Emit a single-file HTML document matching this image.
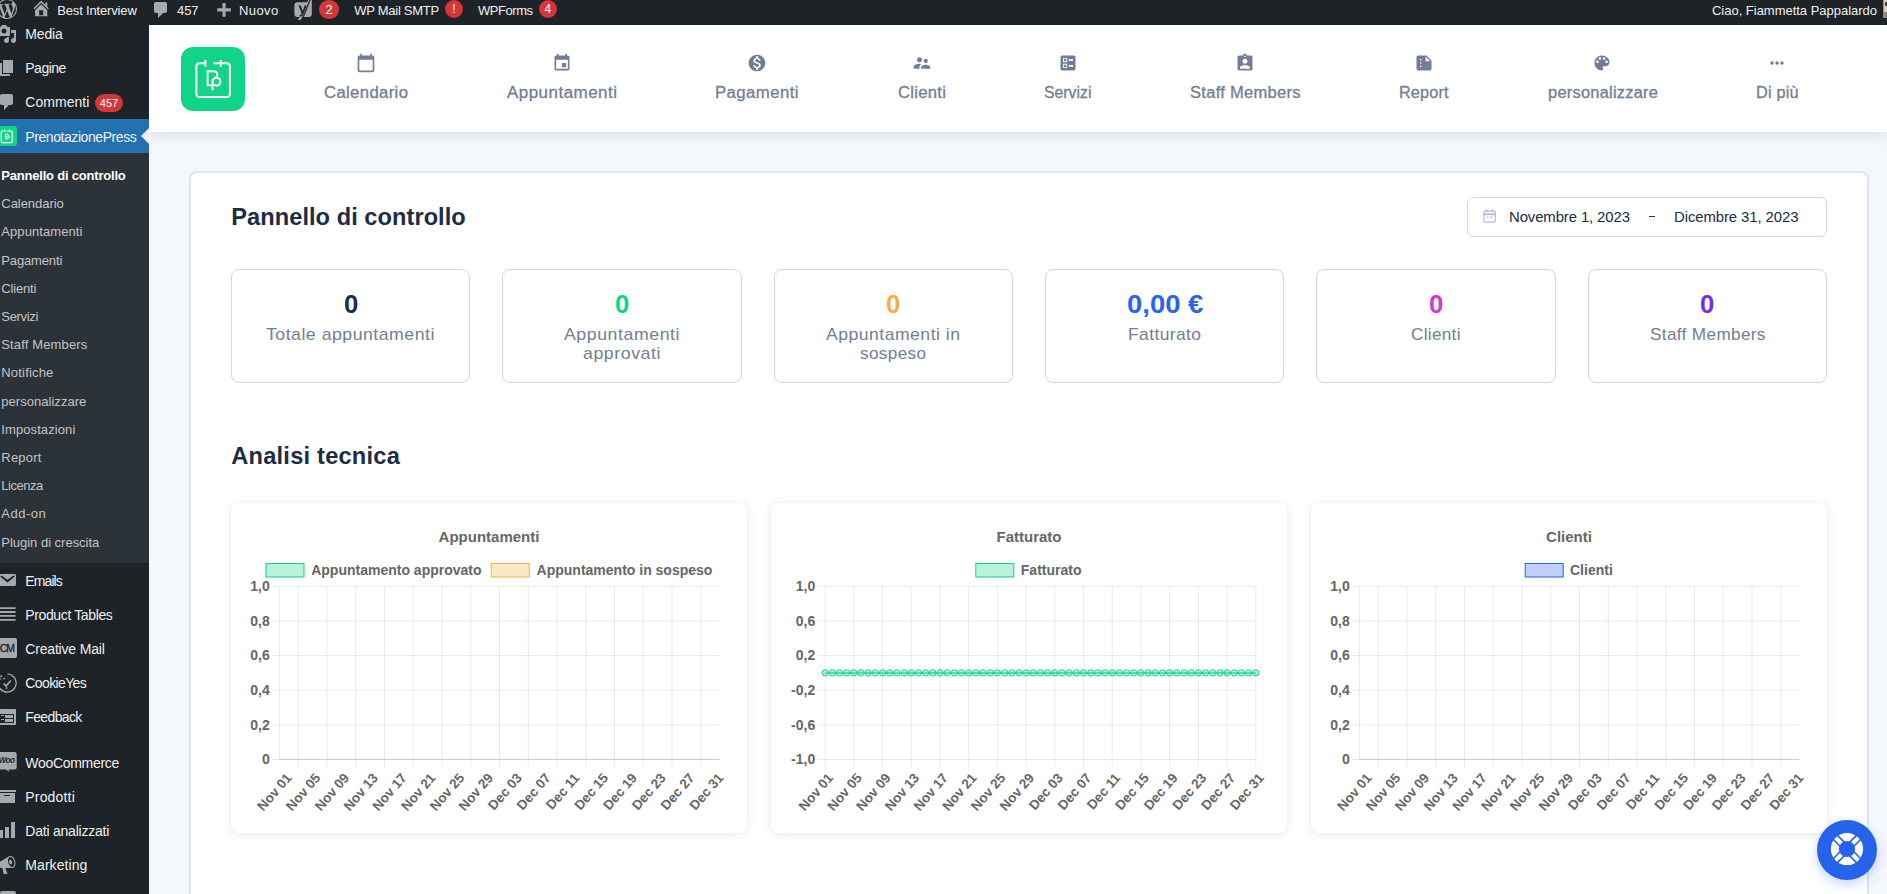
<!DOCTYPE html><html><head><meta charset="utf-8"><title>Pannello di controllo</title><style>
*{box-sizing:border-box;margin:0;padding:0}
html,body{width:1887px;height:894px;overflow:hidden;background:#f4f7fb;font-family:"Liberation Sans",sans-serif;}
.abs{position:absolute}
.t{position:absolute;white-space:nowrap;line-height:1}
#adminbar{position:absolute;left:0;top:0;width:1887px;height:25px;background:#1d2327}
#sidebar{position:absolute;left:0;top:25px;width:149px;height:869px;background:#1d2327}
#submenu{position:absolute;left:0;top:153px;width:149px;height:410px;background:#2c3338}
#current{position:absolute;left:0;top:119px;width:149px;height:34px;background:#2271b1}
#topnav{position:absolute;left:149px;top:25px;width:1738px;height:107px;background:#fff;box-shadow:0 3px 11px rgba(110,125,165,0.19)}
#card{position:absolute;left:189px;top:171px;width:1680px;height:760px;background:#fff;border:2px solid #dce3f5;border-radius:8px}
.stat{position:absolute;top:269px;height:114px;width:239.33px;border:1px solid #cfd6e5;border-radius:8px;background:#fff}
.chart{position:absolute;top:503px;width:516px;height:330px;background:#fff;border-radius:8px;box-shadow:0 1px 9px rgba(60,70,100,0.14)}
.badge{position:absolute;background:#d63638;color:#fff;border-radius:9px;text-align:center;font-size:11px;line-height:18px;height:18px}
svg{position:absolute;overflow:visible}
svg text{font-family:"Liberation Sans",sans-serif}
</style></head><body>
<div id="card"></div>
<div id="topnav"></div>
<div id="sidebar"></div><div id="submenu"></div><div id="current"></div>
<div id="adminbar"></div>
<svg style="left:-3.50px;top:-1.30px" width="20" height="20" viewBox="0 0 20 20" ><path fill="#a7aaad" d="M20 10c0-5.51-4.49-10-10-10C4.48 0 0 4.49 0 10c0 5.52 4.48 10 10 10 5.51 0 10-4.48 10-10zM7.78 15.37L4.37 6.22c.55-.02 1.17-.08 1.17-.08.5-.06.44-1.13-.06-1.11 0 0-1.45.11-2.37.11-.18 0-.37 0-.58-.01C4.12 2.69 6.87 1.11 10 1.11c2.33 0 4.45.87 6.05 2.34-.68-.11-1.65.39-1.65 1.58 0 .74.45 1.36.9 2.1.35.61.55 1.36.55 2.46 0 1.49-1.4 5-1.4 5l-3.03-8.37c.54-.02.82-.17.82-.17.5-.05.44-1.25-.06-1.22 0 0-1.44.12-2.38.12-.87 0-2.33-.12-2.33-.12-.5-.03-.56 1.2-.06 1.22l.92.08 1.26 3.41zM17.41 10c.24-.64.74-1.87.43-4.25.7 1.29 1.05 2.71 1.05 4.25 0 3.29-1.73 6.24-4.4 7.78.97-2.59 1.94-5.2 2.92-7.78zM6.1 18.09C3.12 16.65 1.11 13.53 1.11 10c0-1.3.23-2.48.72-3.59C3.25 10.3 4.67 14.2 6.1 18.09zm4.03-6.63l2.58 6.98c-.86.29-1.76.45-2.71.45-.79 0-1.57-.11-2.29-.33.81-2.38 1.62-4.74 2.42-7.1z"/></svg>
<svg style="left:30.80px;top:-1.70px" width="20.4" height="20.4" viewBox="0 0 20 20" ><path fill="#a7aaad" d="M16 8.5l1.53 1.53-1.06 1.06L10 4.62l-6.47 6.47-1.06-1.06L10 2.5l4 4v-2h2v4zm-6-2.46l6 5.99V18H4v-5.97zM12 17v-5H8v5h4z"/></svg>
<div class="t" style="left:57.30px;top:4.00px;font-size:13.00px;letter-spacing:-0.165px;color:#f0f0f1;">Best Interview</div>
<svg style="left:150.80px;top:0.30px" width="20" height="20" viewBox="0 0 20 20" ><path fill="#a7aaad" d="M5 2h9c1.1 0 2 .9 2 2v7c0 1.1-.9 2-2 2h-2l-5 5v-5H5c-1.1 0-2-.9-2-2V4c0-1.1.9-2 2-2z"/></svg>
<div class="t" style="left:177.00px;top:4.00px;font-size:13.00px;letter-spacing:-0.095px;color:#f0f0f1;">457</div>
<svg style="left:212.70px;top:1.40px" width="21" height="21" viewBox="0 0 20 20" ><path fill="#a7aaad" d="M17 7v3h-5v5H9v-5H4V7h5V2h3v5h5z"/></svg>
<div class="t" style="left:239.00px;top:4.00px;font-size:13.00px;letter-spacing:0.405px;color:#f0f0f1;">Nuovo</div>
<svg style="left:293px;top:-1px" width="21" height="21" viewBox="0 0 21 21"><path fill="#a7aaad" d="M4.2 3.2h9.6l2.6-3.2h2.4v15.2c0 1.6-1.2 2.8-2.8 2.8H9.6l-2.2 3H4.6l2.3-3H4.2C2.6 18 1.4 16.8 1.4 15.2V6c0-1.6 1.2-2.8 2.8-2.8z"/><path fill="#1d2327" d="M16.6 0.4h1.3L9.9 20.6H8.6z"/><path fill="#1d2327" d="M5.6 6.4h2.1l2 5.6 2-5.6h2l-3.4 8.9c-.6 1.6-1.5 2.3-3 2.3h-.7v-1.7h.6c.7 0 1.1-.3 1.4-1l.1-.4z"/></svg>
<div class="abs" style="left:319.20px;top:-0.50px;width:19.6px;height:19.6px;border-radius:50%;background:#d63638"></div>
<div class="t" style="left:325.38px;top:2.98px;font-size:13.00px;color:#fff;">2</div>
<div class="t" style="left:354.20px;top:4.00px;font-size:13.00px;letter-spacing:-0.262px;color:#f0f0f1;">WP Mail SMTP</div>
<div class="abs" style="left:445.00px;top:0.30px;width:18px;height:18px;border-radius:50%;background:#d63638"></div>
<div class="t" style="left:452.33px;top:3.46px;font-size:12.00px;color:#fff;">!</div>
<div class="t" style="left:478.00px;top:4.00px;font-size:13.00px;letter-spacing:-0.462px;color:#f0f0f1;">WPForms</div>
<div class="abs" style="left:538.80px;top:0.30px;width:18px;height:18px;border-radius:50%;background:#d63638"></div>
<div class="t" style="left:544.46px;top:3.46px;font-size:12.00px;color:#fff;">4</div>
<div class="t" style="left:1712.00px;top:4.00px;font-size:13.00px;letter-spacing:-0.019px;color:#f0f0f1;">Ciao, Fiammetta Pappalardo</div>
<div class="abs" style="left:1883px;top:-1px;width:6px;height:19px;background:#d9d0c2;border:1px solid #8c8f94"></div>
<div class="abs" style="left:1885px;top:2px;width:2px;height:4px;background:#3b322c;border-radius:1px 0 0 1px"></div>
<div class="abs" style="left:1884px;top:12px;width:3px;height:5px;background:#8d8781"></div>
<svg style="left:-3.00px;top:24.00px" width="20" height="20" viewBox="0 0 20 20" ><path fill="#a7aaad" d="M13 11V4c0-.55-.45-1-1-1h-1.67L9 1H5L3.67 3H2c-.55 0-1 .45-1 1v7c0 .55.45 1 1 1h10c.55 0 1-.45 1-1zM7 4.5c1.38 0 2.5 1.12 2.5 2.5S8.38 9.5 7 9.5 4.5 8.38 4.5 7 5.62 4.5 7 4.5zM14 6h5v10.5c0 1.38-1.12 2.5-2.5 2.5S14 17.88 14 16.5s1.12-2.5 2.5-2.5c.17 0 .34.02.5.05V9h-3V6zm-4 8.05V13h2v3.5c0 1.38-1.12 2.5-2.5 2.5S7 17.88 7 16.5 8.12 14 9.5 14c.17 0 .34.02.5.05z"/></svg>
<div class="t" style="left:25.30px;top:27.15px;font-size:14.00px;letter-spacing:-0.158px;color:#f0f0f1;">Media</div>
<svg style="left:-3.00px;top:58.00px" width="20" height="20" viewBox="0 0 20 20" ><path fill="#a7aaad" d="M6 15V2h10v13H6zm-1 1h8v2H3V5h2v11z"/></svg>
<div class="t" style="left:25.30px;top:61.15px;font-size:14.00px;letter-spacing:-0.519px;color:#f0f0f1;">Pagine</div>
<svg style="left:-3.00px;top:92.00px" width="20" height="20" viewBox="0 0 20 20" ><path fill="#a7aaad" d="M5 2h9c1.1 0 2 .9 2 2v7c0 1.1-.9 2-2 2h-2l-5 5v-5H5c-1.1 0-2-.9-2-2V4c0-1.1.9-2 2-2z"/></svg>
<div class="t" style="left:25.30px;top:95.15px;font-size:14.00px;letter-spacing:0.029px;color:#f0f0f1;">Commenti</div>
<div class="badge" style="left:94.8px;top:94px;width:28.4px">457</div>
<div class="abs" style="left:0;top:126px;width:17px;height:20px;background:#12d488;border-radius:0 3px 3px 0"></div>
<svg style="left:-3px;top:126px" width="20" height="20" viewBox="0 0 20 20"><rect x="4.2" y="5" width="11" height="11.6" rx="1.3" fill="none" stroke="#fff" stroke-width="1.1"/><path d="M8 3.6v2.4M12.6 3.6v2.4" stroke="#fff" stroke-width="1.1"/><path d="M8.2 5h2" stroke="#12d488" stroke-width="1.4"/><path d="M8.4 8.2h1.9c1.6 0 1.6 2.2 0 2.4M8.4 8.2v4.3h1.4M9.8 14v-3a1.3 1.3 0 1 1 1.3 1.3" fill="none" stroke="#fff" stroke-width="0.9"/></svg>
<div class="t" style="left:25.30px;top:129.95px;font-size:14.00px;letter-spacing:-0.425px;color:#f0f0f1;">PrenotazionePress</div>
<div class="abs" style="left:141px;top:128px;width:0;height:0;border:8px solid transparent;border-right-color:#f0f0f1;border-left-width:0"></div>
<div class="t" style="left:1.30px;top:169.00px;font-size:13.00px;letter-spacing:-0.203px;color:#fff;font-weight:bold;">Pannello di controllo</div>
<div class="t" style="left:1.30px;top:197.20px;font-size:13.00px;letter-spacing:-0.042px;color:#c3c4c7;">Calendario</div>
<div class="t" style="left:1.30px;top:225.40px;font-size:13.00px;letter-spacing:0.071px;color:#c3c4c7;">Appuntamenti</div>
<div class="t" style="left:1.30px;top:253.60px;font-size:13.00px;letter-spacing:-0.144px;color:#c3c4c7;">Pagamenti</div>
<div class="t" style="left:1.30px;top:281.80px;font-size:13.00px;letter-spacing:-0.188px;color:#c3c4c7;">Clienti</div>
<div class="t" style="left:1.30px;top:310.00px;font-size:13.00px;letter-spacing:-0.335px;color:#c3c4c7;">Servizi</div>
<div class="t" style="left:1.30px;top:338.20px;font-size:13.00px;letter-spacing:0.142px;color:#c3c4c7;">Staff Members</div>
<div class="t" style="left:1.30px;top:366.40px;font-size:13.00px;letter-spacing:0.178px;color:#c3c4c7;">Notifiche</div>
<div class="t" style="left:1.30px;top:394.60px;font-size:13.00px;letter-spacing:0.035px;color:#c3c4c7;">personalizzare</div>
<div class="t" style="left:1.30px;top:422.80px;font-size:13.00px;letter-spacing:0.093px;color:#c3c4c7;">Impostazioni</div>
<div class="t" style="left:1.30px;top:451.00px;font-size:13.00px;letter-spacing:0.196px;color:#c3c4c7;">Report</div>
<div class="t" style="left:1.30px;top:479.20px;font-size:13.00px;letter-spacing:-0.468px;color:#c3c4c7;">Licenza</div>
<div class="t" style="left:1.30px;top:507.40px;font-size:13.00px;letter-spacing:0.516px;color:#c3c4c7;">Add-on</div>
<div class="t" style="left:1.30px;top:535.60px;font-size:13.00px;letter-spacing:-0.016px;color:#c3c4c7;">Plugin di crescita</div>
<svg style="left:-3.00px;top:569.90px" width="20" height="20" viewBox="0 0 20 20" ><path fill="#a7aaad" d="M3.87 4h13.25C18.37 4 19 4.59 19 5.79v8.42c0 1.19-.63 1.79-1.88 1.79H3.87c-1.25 0-1.88-.6-1.88-1.79V5.79c0-1.2.63-1.79 1.88-1.79zm6.62 8.6l6.74-5.53c.24-.2.43-.66.13-1.07-.29-.41-.82-.42-1.17-.17l-5.7 3.86L4.8 5.83c-.35-.25-.88-.24-1.17.17-.3.41-.11.87.13 1.07z"/></svg>
<div class="t" style="left:25.30px;top:574.15px;font-size:14.00px;letter-spacing:-0.902px;color:#f0f0f1;">Emails</div>
<svg style="left:-3px;top:604.2px" width="20" height="20" viewBox="0 0 20 20"><path d="M2 4.1h16.6M2 8h16.6M2 11.9h16.6M2 15.8h16.6" stroke="#a7aaad" stroke-width="1.8"/></svg>
<div class="t" style="left:25.30px;top:608.15px;font-size:14.00px;letter-spacing:-0.374px;color:#f0f0f1;">Product Tables</div>
<div class="abs" style="left:-2px;top:638.2px;width:19px;height:19.6px;background:#a7aaad;border-radius:2px"></div>
<div class="t" style="left:-0.30px;top:643.50px;font-size:10.40px;letter-spacing:-0.874px;color:#1d2327;-webkit-text-stroke:0.3px #1d2327;">CM</div>
<div class="t" style="left:25.30px;top:642.15px;font-size:14.00px;letter-spacing:-0.183px;color:#f0f0f1;">Creative Mail</div>
<svg style="left:-3px;top:673px" width="20" height="20" viewBox="0 0 20 20"><path d="M10.4 0.9a9.1 9.1 0 1 1-9.2 7.3" fill="none" stroke="#a7aaad" stroke-width="1.3"/><path d="M6.6 10.4l2.5 2.6 4.8-5.6" fill="none" stroke="#a7aaad" stroke-width="1.6"/><circle cx="4.2" cy="3.2" r="1" fill="#a7aaad"/><circle cx="7" cy="5.6" r="0.9" fill="#a7aaad"/><circle cx="3.4" cy="6" r="0.7" fill="#a7aaad"/><circle cx="9.6" cy="15" r="0.9" fill="#a7aaad"/></svg>
<div class="t" style="left:25.30px;top:676.15px;font-size:14.00px;letter-spacing:-0.615px;color:#f0f0f1;">CookieYes</div>
<svg style="left:-3.00px;top:707.00px" width="20" height="20" viewBox="0 0 20 20" ><path fill="#a7aaad" d="M2 2h16c.55 0 1 .45 1 1v14c0 .55-.45 1-1 1H2c-.55 0-1-.45-1-1V3c0-.55.45-1 1-1zm15 14V7H3v9h14zM4 8v1h3V8H4zm4 0v3h8V8H8zm-4 4v1h3v-1H4zm4 0v3h8v-3H8z"/></svg>
<div class="t" style="left:25.30px;top:710.15px;font-size:14.00px;letter-spacing:-0.641px;color:#f0f0f1;">Feedback</div>
<svg style="left:-3px;top:751px" width="20" height="22" viewBox="0 0 20 22"><path fill="#a7aaad" d="M1.5 1.1h16.3c1 0 1.900.8 1.900 1.900v13.500c0 1-.8 1.900-1.900 1.900h-6.200l.9 2.600-3.600-2.600H1.500c-1 0-1.900-.8-1.900-1.900V3c0-1 .8-1.900 1.900-1.900z"/></svg>
<div class="t" style="left:-1.60px;top:757.36px;font-size:8.20px;letter-spacing:-0.555px;color:#1d2327;font-weight:bold;font-style:italic;">Woo</div>
<div class="t" style="left:25.30px;top:756.15px;font-size:14.00px;letter-spacing:-0.299px;color:#f0f0f1;">WooCommerce</div>
<svg style="left:-3.00px;top:786.20px" width="20" height="20" viewBox="0 0 20 20" ><path fill="#a7aaad" d="M19 4v2H1V4h18zM2 7h16v10H2V7zm11 3V9H7v1h6z"/></svg>
<div class="t" style="left:25.30px;top:790.15px;font-size:14.00px;letter-spacing:0.179px;color:#f0f0f1;">Prodotti</div>
<svg style="left:-3.00px;top:820.20px" width="20" height="20" viewBox="0 0 20 20" ><path fill="#a7aaad" d="M18 18V2h-4v16h4zm-6 0V7H8v11h4zm-6 0v-8H2v8h4z"/></svg>
<div class="t" style="left:25.30px;top:824.15px;font-size:14.00px;letter-spacing:-0.225px;color:#f0f0f1;">Dati analizzati</div>
<svg style="left:-3.00px;top:854.50px" width="20" height="20" viewBox="0 0 20 20" ><path fill="#a7aaad" d="M18.15 5.94c.46 1.62.38 3.22-.02 4.48-.42 1.28-1.26 2.18-2.3 2.48-.16.06-.26.06-.4.06-.06.02-.12.02-.18.02-.06.02-.14.02-.22.02h-6.8l2.22 5.5c.02.14-.06.26-.14.34-.08.1-.24.16-.34.16H6.95c-.1 0-.26-.06-.34-.16-.08-.08-.16-.2-.14-.34l-1-5.5H4.25l-.02-.02c-.5.06-1.08-.18-1.54-.62s-.88-1.08-1.06-1.88c-.24-.8-.2-1.56-.02-2.2.18-.62.58-1.08 1.06-1.3l.02-.02 9-5.4c.1-.06.18-.1.24-.16.06-.04.14-.08.24-.12.16-.08.28-.12.5-.18 1.04-.3 2.24.1 3.22.98s1.84 2.24 2.26 3.86zm-2.58 5.98h-.02c.4-.1.74-.34 1.04-.7.58-.7.86-1.76.86-3.04 0-.64-.1-1.3-.28-1.98-.34-1.36-1.02-2.5-1.78-3.24s-1.68-1.1-2.46-.88c-.82.22-1.4.96-1.7 2-.32 1.04-.28 2.36.06 3.72.38 1.36 1 2.5 1.8 3.24.78.74 1.62 1.1 2.48.88zm-2.54-7.08c.22-.04.42-.02.62.04.38.16.76.48 1.02 1s.42 1.2.42 1.78c0 .3-.04.56-.12.8-.18.48-.44.84-.86.94-.34.1-.8-.06-1.14-.4s-.64-.86-.78-1.5c-.18-.62-.12-1.24.02-1.72s.48-.84.82-.94z"/></svg>
<div class="t" style="left:25.30px;top:858.15px;font-size:14.00px;letter-spacing:0.066px;color:#f0f0f1;">Marketing</div>
<div class="abs" style="left:0;top:890.5px;width:16px;height:4px;background:#a7aaad;border-radius:2px 2px 0 0"></div>
<div class="abs" style="left:181px;top:47px;width:64px;height:64px;border-radius:12px;background:#12d488"></div>
<svg style="left:181px;top:47px" width="64" height="64" viewBox="0 0 64 64" fill="none" stroke="#fff" stroke-width="2" stroke-linecap="butt">
<path d="M24.4 16.3H18.4a3 3 0 0 0-3 3V47a3 3 0 0 0 3 3H45.9a3 3 0 0 0 3-3V19.3a3 3 0 0 0-3-3H32.3"/>
<path d="M24.4 12.9v6.8M39.8 12.9v6.8" stroke-width="2.1"/>
<path d="M26.6 24.3h6c2.5 0 3.7 1.5 3.7 3.3 0 1.5-.9 2.8-2.4 3.2" stroke-width="1.9"/>
<path d="M26.6 23.35v15h4.9" stroke-width="1.9"/>
<circle cx="35.5" cy="34.7" r="3.9" stroke-width="1.9"/>
<path d="M31.55 32.4v10.9" stroke-width="1.9"/>
</svg>
<svg style="left:355.70px;top:53.00px" width="20" height="20" viewBox="0 0 24 24" ><path fill="#727e95" d="M20 3h-1V1h-2v2H7V1H5v2H4c-1.1 0-2 .9-2 2v16c0 1.1.9 2 2 2h16c1.1 0 2-.9 2-2V5c0-1.1-.9-2-2-2zm0 18H4V8h16v13z"/></svg>
<div class="t" style="left:323.70px;top:85.39px;font-size:15.60px;letter-spacing:0.332px;color:#727e95;transform:scaleX(1.0708);transform-origin:0 0;-webkit-text-stroke:0.3px #727e95;">Calendario</div>
<svg style="left:551.50px;top:53.00px" width="20" height="20" viewBox="0 0 24 24" ><path fill="#727e95" d="M17 12h-5v5h5v-5zM16 1v2H8V1H6v2H5c-1.11 0-1.99.9-1.99 2L3 19c0 1.1.89 2 2 2h14c1.1 0 2-.9 2-2V5c0-1.1-.9-2-2-2h-1V1h-2zm3 18H5V8h14v11z"/></svg>
<div class="t" style="left:506.50px;top:85.39px;font-size:15.60px;letter-spacing:0.437px;color:#727e95;transform:scaleX(1.0883);transform-origin:0 0;-webkit-text-stroke:0.3px #727e95;">Appuntamenti</div>
<svg style="left:747.00px;top:53.00px" width="20" height="20" viewBox="0 0 24 24" ><path fill="#727e95" d="M12 2C6.48 2 2 6.48 2 12s4.48 10 10 10 10-4.48 10-10S17.52 2 12 2zm1.41 16.09V20h-2.67v-1.93c-1.71-.36-3.16-1.46-3.27-3.4h1.96c.1 1.05.82 1.87 2.65 1.87 1.96 0 2.4-.98 2.4-1.59 0-.83-.44-1.61-2.67-2.14-2.48-.6-4.18-1.62-4.18-3.67 0-1.72 1.39-2.84 3.11-3.21V4h2.67v1.95c1.86.45 2.79 1.86 2.85 3.39H14.3c-.05-1.11-.64-1.87-2.22-1.87-1.5 0-2.4.68-2.4 1.64 0 .84.65 1.39 2.67 1.91s4.18 1.39 4.18 3.91c-.01 1.83-1.38 2.83-3.12 3.16z"/></svg>
<div class="t" style="left:715.25px;top:85.39px;font-size:15.60px;letter-spacing:0.390px;color:#727e95;transform:scaleX(1.0746);transform-origin:0 0;-webkit-text-stroke:0.3px #727e95;">Pagamenti</div>
<svg style="left:911.50px;top:53.00px" width="20" height="20" viewBox="0 0 24 24" ><path fill="#727e95" d="M16.5 12c1.38 0 2.49-1.12 2.49-2.5S17.88 7 16.5 7C15.12 7 14 8.12 14 9.5s1.12 2.5 2.5 2.5zM9 11c1.66 0 2.99-1.34 2.99-3S10.66 5 9 5C7.34 5 6 6.34 6 8s1.34 3 3 3zm7.5 3c-1.83 0-5.5.92-5.5 2.75V19h11v-2.25c0-1.83-3.67-2.75-5.5-2.75zM9 13c-2.33 0-7 1.17-7 3.5V19h7v-2.25c0-.85.33-2.34 2.37-3.47C10.5 13.1 9.66 13 9 13z"/></svg>
<div class="t" style="left:897.50px;top:85.39px;font-size:15.60px;letter-spacing:0.271px;color:#727e95;transform:scaleX(1.0672);transform-origin:0 0;-webkit-text-stroke:0.3px #727e95;">Clienti</div>
<svg style="left:1058.00px;top:53.00px" width="20" height="20" viewBox="0 0 24 24" ><path fill="#727e95" d="M13 9.5h5v-2h-5v2zm0 7h5v-2h-5v2zm6 4.500H5c-1.1 0-2-.9-2-2V5c0-1.1.9-2 2-2h14c1.100 0 2 .9 2 2v14c0 1.1-.9 2-2 2zM6 11h5V6H6v5zm1-4h3v3H7V7zM6 18h5v-5H6v5zm1-4h3v3H7v-3z"/></svg>
<div class="t" style="left:1044.25px;top:85.39px;font-size:15.60px;letter-spacing:0.040px;color:#727e95;transform:scaleX(1.0095);transform-origin:0 0;-webkit-text-stroke:0.3px #727e95;">Servizi</div>
<svg style="left:1235.30px;top:53.00px" width="20" height="20" viewBox="0 0 24 24" ><path fill="#727e95" d="M19 3h-4.180C14.400 1.840 13.300 1 12 1c-1.300 0-2.400.840-2.820 2H5c-1.100 0-2 .9-2 2v14c0 1.100.9 2 2 2h14c1.100 0 2-.9 2-2V5c0-1.100-.9-2-2-2zm-7 0c.550 0 1 .450 1 1s-.450 1-1 1-1-.450-1-1 .450-1 1-1zm0 4c1.660 0 3 1.340 3 3s-1.340 3-3 3-3-1.340-3-3 1.340-3 3-3zm6 12H6v-1.400c0-2 4-3.100 6-3.100s6 1.100 6 3.100V19z"/></svg>
<div class="t" style="left:1190.05px;top:85.39px;font-size:15.60px;letter-spacing:0.273px;color:#727e95;transform:scaleX(1.0582);transform-origin:0 0;-webkit-text-stroke:0.3px #727e95;">Staff Members</div>
<svg style="left:1414.00px;top:53.00px" width="20" height="20" viewBox="0 0 24 24" ><path fill="#727e95" d="M15 3H5c-1.100 0-1.990.9-1.990 2L3 19c0 1.100.890 2 1.990 2H19c1.100 0 2-.9 2-2V9l-6-6zM8 17c-.550 0-1-.450-1-1s.450-1 1-1 1 .450 1 1-.450 1-1 1zm0-4c-.550 0-1-.450-1-1s.450-1 1-1 1 .450 1 1-.450 1-1 1zm0-4c-.550 0-1-.450-1-1s.450-1 1-1 1 .450 1 1-.450 1-1 1zm6 1V4.500l5.500 5.500H14z"/></svg>
<div class="t" style="left:1399.25px;top:85.39px;font-size:15.60px;letter-spacing:0.187px;color:#727e95;transform:scaleX(1.0364);transform-origin:0 0;-webkit-text-stroke:0.3px #727e95;">Report</div>
<svg style="left:1592.00px;top:53.00px" width="20" height="20" viewBox="0 0 24 24" ><path fill="#727e95" d="M12 3c-4.970 0-9 4.030-9 9s4.030 9 9 9c.830 0 1.500-.670 1.500-1.500 0-.390-.150-.740-.390-1.010-.230-.260-.380-.610-.380-.990 0-.830.670-1.500 1.500-1.500H16c2.760 0 5-2.240 5-5 0-4.420-4.030-8-9-8zm-5.500 9c-.830 0-1.500-.670-1.500-1.500S5.670 9 6.500 9 8 9.670 8 10.500 7.330 12 6.500 12zm3-4C8.670 8 8 7.330 8 6.500S8.670 5 9.500 5s1.500.670 1.500 1.500S10.330 8 9.500 8zm5 0c-.830 0-1.500-.670-1.500-1.500S13.670 5 14.500 5s1.500.670 1.500 1.500S15.330 8 14.500 8zm3 4c-.830 0-1.500-.670-1.500-1.500S16.670 9 17.500 9s1.500.670 1.500 1.500-.670 1.500-1.500 1.500z"/></svg>
<div class="t" style="left:1547.50px;top:85.39px;font-size:15.60px;letter-spacing:0.230px;color:#727e95;transform:scaleX(1.0532);transform-origin:0 0;-webkit-text-stroke:0.3px #727e95;">personalizzare</div>
<svg style="left:1767.00px;top:53.00px" width="20" height="20" viewBox="0 0 24 24" ><path fill="#727e95" d="M6 10c-1.100 0-2 .9-2 2s.9 2 2 2 2-.9 2-2-.9-2-2-2zm12 0c-1.100 0-2 .9-2 2s.9 2 2 2 2-.9 2-2-.9-2-2-2zm-6 0c-1.100 0-2 .9-2 2s.9 2 2 2 2-.9 2-2-.9-2-2-2z"/></svg>
<div class="t" style="left:1755.75px;top:85.39px;font-size:15.60px;letter-spacing:0.183px;color:#727e95;transform:scaleX(1.0417);transform-origin:0 0;-webkit-text-stroke:0.3px #727e95;">Di più</div>
<div class="t" style="left:231.30px;top:206.12px;font-size:23.60px;letter-spacing:0.056px;color:#202c45;font-weight:bold;">Pannello di controllo</div>
<div class="t" style="left:231.30px;top:444.82px;font-size:23.60px;letter-spacing:0.231px;color:#202c45;font-weight:bold;">Analisi tecnica</div>
<div class="abs" style="left:1467px;top:197px;width:360px;height:40px;border:1px solid #cfd6e5;border-radius:6px;background:#fff"></div>
<svg style="left:1482.6px;top:209.2px" width="13.2" height="14.1" viewBox="0 0 14 15"><rect x="0.9" y="2.3" width="12.2" height="11.6" rx="1.4" fill="none" stroke="#b4bcd0" stroke-width="1.3"/><path d="M0.9 5.6h12.2" stroke="#b4bcd0" stroke-width="2"/><path d="M4 0.6v2.6M10 0.6v2.6" stroke="#b4bcd0" stroke-width="1.4"/><path d="M3.6 8.6h1.6M6.2 8.6h1.6M8.8 8.6h1.6" stroke="#b4bcd0" stroke-width="1.2"/></svg>
<div class="t" style="left:1508.70px;top:208.96px;font-size:15.40px;letter-spacing:-0.114px;color:#202c45;transform:scaleX(0.9681);transform-origin:0 0;">Novembre 1, 2023</div>
<div class="abs" style="left:1649.4px;top:216.1px;width:6px;height:1.3px;background:#2b3650"></div>
<div class="t" style="left:1673.80px;top:208.96px;font-size:15.40px;letter-spacing:-0.105px;color:#202c45;transform:scaleX(0.9694);transform-origin:0 0;">Dicembre 31, 2023</div>
<div class="stat" style="left:231.00px"></div>
<div class="t" style="left:343.52px;top:292.48px;font-size:25.30px;color:#202c45;font-weight:bold;transform:scaleX(1.0163);transform-origin:0 0;">0</div>
<div class="t" style="left:266.47px;top:326.27px;font-size:16.10px;letter-spacing:0.455px;color:#727e95;transform:scaleX(1.0993);transform-origin:0 0;">Totale appuntamenti</div>
<div class="stat" style="left:502.33px"></div>
<div class="t" style="left:614.85px;top:292.48px;font-size:25.30px;color:#12d488;font-weight:bold;transform:scaleX(1.0163);transform-origin:0 0;">0</div>
<div class="t" style="left:564.25px;top:326.27px;font-size:16.10px;letter-spacing:0.514px;color:#727e95;transform:scaleX(1.0999);transform-origin:0 0;">Appuntamenti</div>
<div class="t" style="left:583.25px;top:345.27px;font-size:16.10px;letter-spacing:0.493px;color:#727e95;transform:scaleX(1.1043);transform-origin:0 0;">approvati</div>
<div class="stat" style="left:773.66px"></div>
<div class="t" style="left:886.18px;top:292.48px;font-size:25.30px;color:#f5ae41;font-weight:bold;transform:scaleX(1.0163);transform-origin:0 0;">0</div>
<div class="t" style="left:826.33px;top:326.27px;font-size:16.10px;letter-spacing:0.441px;color:#727e95;transform:scaleX(1.0936);transform-origin:0 0;">Appuntamenti in</div>
<div class="t" style="left:860.33px;top:345.27px;font-size:16.10px;letter-spacing:0.352px;color:#727e95;transform:scaleX(1.0632);transform-origin:0 0;">sospeso</div>
<div class="stat" style="left:1044.99px"></div>
<div class="t" style="left:1126.51px;top:292.48px;font-size:25.30px;color:#2764f1;font-weight:bold;transform:scaleX(1.0847);transform-origin:0 0;">0,00 €</div>
<div class="t" style="left:1128.16px;top:326.27px;font-size:16.10px;letter-spacing:0.375px;color:#727e95;transform:scaleX(1.0826);transform-origin:0 0;">Fatturato</div>
<div class="stat" style="left:1316.32px"></div>
<div class="t" style="left:1428.84px;top:292.48px;font-size:25.30px;color:#d538c4;font-weight:bold;transform:scaleX(1.0163);transform-origin:0 0;">0</div>
<div class="t" style="left:1411.24px;top:326.27px;font-size:16.10px;letter-spacing:0.278px;color:#727e95;transform:scaleX(1.0667);transform-origin:0 0;">Clienti</div>
<div class="stat" style="left:1587.65px"></div>
<div class="t" style="left:1700.17px;top:292.48px;font-size:25.30px;color:#7c29ec;font-weight:bold;transform:scaleX(1.0163);transform-origin:0 0;">0</div>
<div class="t" style="left:1649.57px;top:326.27px;font-size:16.10px;letter-spacing:0.324px;color:#727e95;transform:scaleX(1.0667);transform-origin:0 0;">Staff Members</div>
<div class="chart" style="left:231px"></div>
<svg style="left:0;top:0" width="1887" height="894" viewBox="0 0 1887 894">
<text x="489.0" y="541.7" font-size="15" font-weight="bold" fill="#666" text-anchor="middle">Appuntamenti</text>
<rect x="266.0" y="563.5" width="38" height="13.5" fill="rgba(18,212,136,0.3)" stroke="#12d488" stroke-width="1"/>
<text x="311.2" y="574.6" font-size="14" font-weight="bold" fill="#666">Appuntamento approvato</text>
<rect x="491.2" y="563.5" width="38" height="13.5" fill="rgba(245,174,65,0.3)" stroke="#f5ae41" stroke-width="1"/>
<text x="536.6" y="574.6" font-size="14" font-weight="bold" fill="#666">Appuntamento in sospeso</text>
<path d="M272.2 586.30H279.4" stroke="rgba(0,0,0,0.085)" stroke-width="1"/>
<path d="M279.4 586.30H719.6" stroke="rgba(0,0,0,0.085)" stroke-width="1"/>
<text x="269.7" y="591.00" font-size="14" font-weight="bold" fill="#666" text-anchor="end">1,0</text>
<path d="M272.2 620.94H279.4" stroke="rgba(0,0,0,0.085)" stroke-width="1"/>
<path d="M279.4 620.94H719.6" stroke="rgba(0,0,0,0.085)" stroke-width="1"/>
<text x="269.7" y="625.64" font-size="14" font-weight="bold" fill="#666" text-anchor="end">0,8</text>
<path d="M272.2 655.58H279.4" stroke="rgba(0,0,0,0.085)" stroke-width="1"/>
<path d="M279.4 655.58H719.6" stroke="rgba(0,0,0,0.085)" stroke-width="1"/>
<text x="269.7" y="660.28" font-size="14" font-weight="bold" fill="#666" text-anchor="end">0,6</text>
<path d="M272.2 690.22H279.4" stroke="rgba(0,0,0,0.085)" stroke-width="1"/>
<path d="M279.4 690.22H719.6" stroke="rgba(0,0,0,0.085)" stroke-width="1"/>
<text x="269.7" y="694.92" font-size="14" font-weight="bold" fill="#666" text-anchor="end">0,4</text>
<path d="M272.2 724.86H279.4" stroke="rgba(0,0,0,0.085)" stroke-width="1"/>
<path d="M279.4 724.86H719.6" stroke="rgba(0,0,0,0.085)" stroke-width="1"/>
<text x="269.7" y="729.56" font-size="14" font-weight="bold" fill="#666" text-anchor="end">0,2</text>
<path d="M272.2 759.50H279.4" stroke="rgba(0,0,0,0.085)" stroke-width="1"/>
<path d="M279.4 759.50H719.6" stroke="rgba(0,0,0,0.19)" stroke-width="1"/>
<text x="269.7" y="764.20" font-size="14" font-weight="bold" fill="#666" text-anchor="end">0</text>
<path d="M298.25 586.3V766.7" stroke="rgba(0,0,0,0.085)" stroke-width="1"/>
<path d="M327.00 586.3V766.7" stroke="rgba(0,0,0,0.085)" stroke-width="1"/>
<path d="M355.75 586.3V766.7" stroke="rgba(0,0,0,0.085)" stroke-width="1"/>
<path d="M384.50 586.3V766.7" stroke="rgba(0,0,0,0.085)" stroke-width="1"/>
<path d="M413.25 586.3V766.7" stroke="rgba(0,0,0,0.085)" stroke-width="1"/>
<path d="M442.00 586.3V766.7" stroke="rgba(0,0,0,0.085)" stroke-width="1"/>
<path d="M470.75 586.3V766.7" stroke="rgba(0,0,0,0.085)" stroke-width="1"/>
<path d="M499.50 586.3V766.7" stroke="rgba(0,0,0,0.085)" stroke-width="1"/>
<path d="M528.25 586.3V766.7" stroke="rgba(0,0,0,0.085)" stroke-width="1"/>
<path d="M557.00 586.3V766.7" stroke="rgba(0,0,0,0.085)" stroke-width="1"/>
<path d="M585.75 586.3V766.7" stroke="rgba(0,0,0,0.085)" stroke-width="1"/>
<path d="M614.50 586.3V766.7" stroke="rgba(0,0,0,0.085)" stroke-width="1"/>
<path d="M643.25 586.3V766.7" stroke="rgba(0,0,0,0.085)" stroke-width="1"/>
<path d="M672.00 586.3V766.7" stroke="rgba(0,0,0,0.085)" stroke-width="1"/>
<path d="M700.75 586.3V766.7" stroke="rgba(0,0,0,0.085)" stroke-width="1"/>
<path d="M279.40 586.3V759.5" stroke="rgba(0,0,0,0.085)" stroke-width="1"/>
<text transform="translate(289.70,775.9) rotate(-49)" font-size="13.5" font-weight="bold" fill="#666" text-anchor="end" dominant-baseline="middle">Nov 01</text>
<text transform="translate(318.48,775.9) rotate(-49)" font-size="13.5" font-weight="bold" fill="#666" text-anchor="end" dominant-baseline="middle">Nov 05</text>
<text transform="translate(347.26,775.9) rotate(-49)" font-size="13.5" font-weight="bold" fill="#666" text-anchor="end" dominant-baseline="middle">Nov 09</text>
<text transform="translate(376.04,775.9) rotate(-49)" font-size="13.5" font-weight="bold" fill="#666" text-anchor="end" dominant-baseline="middle">Nov 13</text>
<text transform="translate(404.82,775.9) rotate(-49)" font-size="13.5" font-weight="bold" fill="#666" text-anchor="end" dominant-baseline="middle">Nov 17</text>
<text transform="translate(433.60,775.9) rotate(-49)" font-size="13.5" font-weight="bold" fill="#666" text-anchor="end" dominant-baseline="middle">Nov 21</text>
<text transform="translate(462.38,775.9) rotate(-49)" font-size="13.5" font-weight="bold" fill="#666" text-anchor="end" dominant-baseline="middle">Nov 25</text>
<text transform="translate(491.16,775.9) rotate(-49)" font-size="13.5" font-weight="bold" fill="#666" text-anchor="end" dominant-baseline="middle">Nov 29</text>
<text transform="translate(519.94,775.9) rotate(-49)" font-size="13.5" font-weight="bold" fill="#666" text-anchor="end" dominant-baseline="middle">Dec 03</text>
<text transform="translate(548.72,775.9) rotate(-49)" font-size="13.5" font-weight="bold" fill="#666" text-anchor="end" dominant-baseline="middle">Dec 07</text>
<text transform="translate(577.50,775.9) rotate(-49)" font-size="13.5" font-weight="bold" fill="#666" text-anchor="end" dominant-baseline="middle">Dec 11</text>
<text transform="translate(606.28,775.9) rotate(-49)" font-size="13.5" font-weight="bold" fill="#666" text-anchor="end" dominant-baseline="middle">Dec 15</text>
<text transform="translate(635.06,775.9) rotate(-49)" font-size="13.5" font-weight="bold" fill="#666" text-anchor="end" dominant-baseline="middle">Dec 19</text>
<text transform="translate(663.84,775.9) rotate(-49)" font-size="13.5" font-weight="bold" fill="#666" text-anchor="end" dominant-baseline="middle">Dec 23</text>
<text transform="translate(692.62,775.9) rotate(-49)" font-size="13.5" font-weight="bold" fill="#666" text-anchor="end" dominant-baseline="middle">Dec 27</text>
<text transform="translate(721.40,775.9) rotate(-49)" font-size="13.5" font-weight="bold" fill="#666" text-anchor="end" dominant-baseline="middle">Dec 31</text>
</svg>
<div class="chart" style="left:771px"></div>
<svg style="left:0;top:0" width="1887" height="894" viewBox="0 0 1887 894">
<text x="1029.0" y="541.7" font-size="15" font-weight="bold" fill="#666" text-anchor="middle">Fatturato</text>
<rect x="975.8" y="563.5" width="38" height="13.5" fill="rgba(18,212,136,0.3)" stroke="#12d488" stroke-width="1"/>
<text x="1020.8" y="574.6" font-size="14" font-weight="bold" fill="#666">Fatturato</text>
<path d="M817.9 586.30H825.1" stroke="rgba(0,0,0,0.085)" stroke-width="1"/>
<path d="M825.1 586.30H1255.8" stroke="rgba(0,0,0,0.085)" stroke-width="1"/>
<text x="815.2" y="591.00" font-size="14" font-weight="bold" fill="#666" text-anchor="end">1,0</text>
<path d="M817.9 620.94H825.1" stroke="rgba(0,0,0,0.085)" stroke-width="1"/>
<path d="M825.1 620.94H1255.8" stroke="rgba(0,0,0,0.085)" stroke-width="1"/>
<text x="815.2" y="625.64" font-size="14" font-weight="bold" fill="#666" text-anchor="end">0,6</text>
<path d="M817.9 655.58H825.1" stroke="rgba(0,0,0,0.085)" stroke-width="1"/>
<path d="M825.1 655.58H1255.8" stroke="rgba(0,0,0,0.085)" stroke-width="1"/>
<text x="815.2" y="660.28" font-size="14" font-weight="bold" fill="#666" text-anchor="end">0,2</text>
<path d="M817.9 690.22H825.1" stroke="rgba(0,0,0,0.085)" stroke-width="1"/>
<path d="M825.1 690.22H1255.8" stroke="rgba(0,0,0,0.085)" stroke-width="1"/>
<text x="815.2" y="694.92" font-size="14" font-weight="bold" fill="#666" text-anchor="end">-0,2</text>
<path d="M817.9 724.86H825.1" stroke="rgba(0,0,0,0.085)" stroke-width="1"/>
<path d="M825.1 724.86H1255.8" stroke="rgba(0,0,0,0.085)" stroke-width="1"/>
<text x="815.2" y="729.56" font-size="14" font-weight="bold" fill="#666" text-anchor="end">-0,6</text>
<path d="M817.9 759.50H825.1" stroke="rgba(0,0,0,0.085)" stroke-width="1"/>
<path d="M825.1 759.50H1255.8" stroke="rgba(0,0,0,0.085)" stroke-width="1"/>
<text x="815.2" y="764.20" font-size="14" font-weight="bold" fill="#666" text-anchor="end">-1,0</text>
<path d="M853.81 586.3V766.7" stroke="rgba(0,0,0,0.085)" stroke-width="1"/>
<path d="M882.53 586.3V766.7" stroke="rgba(0,0,0,0.085)" stroke-width="1"/>
<path d="M911.24 586.3V766.7" stroke="rgba(0,0,0,0.085)" stroke-width="1"/>
<path d="M939.95 586.3V766.7" stroke="rgba(0,0,0,0.085)" stroke-width="1"/>
<path d="M968.66 586.3V766.7" stroke="rgba(0,0,0,0.085)" stroke-width="1"/>
<path d="M997.38 586.3V766.7" stroke="rgba(0,0,0,0.085)" stroke-width="1"/>
<path d="M1026.09 586.3V766.7" stroke="rgba(0,0,0,0.085)" stroke-width="1"/>
<path d="M1054.80 586.3V766.7" stroke="rgba(0,0,0,0.085)" stroke-width="1"/>
<path d="M1083.52 586.3V766.7" stroke="rgba(0,0,0,0.085)" stroke-width="1"/>
<path d="M1112.23 586.3V766.7" stroke="rgba(0,0,0,0.085)" stroke-width="1"/>
<path d="M1140.94 586.3V766.7" stroke="rgba(0,0,0,0.085)" stroke-width="1"/>
<path d="M1169.66 586.3V766.7" stroke="rgba(0,0,0,0.085)" stroke-width="1"/>
<path d="M1198.37 586.3V766.7" stroke="rgba(0,0,0,0.085)" stroke-width="1"/>
<path d="M1227.08 586.3V766.7" stroke="rgba(0,0,0,0.085)" stroke-width="1"/>
<path d="M1255.80 586.3V766.7" stroke="rgba(0,0,0,0.085)" stroke-width="1"/>
<path d="M825.10 586.3V766.7" stroke="rgba(0,0,0,0.085)" stroke-width="1"/>
<text transform="translate(831.20,775.9) rotate(-49)" font-size="13.5" font-weight="bold" fill="#666" text-anchor="end" dominant-baseline="middle">Nov 01</text>
<text transform="translate(859.91,775.9) rotate(-49)" font-size="13.5" font-weight="bold" fill="#666" text-anchor="end" dominant-baseline="middle">Nov 05</text>
<text transform="translate(888.63,775.9) rotate(-49)" font-size="13.5" font-weight="bold" fill="#666" text-anchor="end" dominant-baseline="middle">Nov 09</text>
<text transform="translate(917.34,775.9) rotate(-49)" font-size="13.5" font-weight="bold" fill="#666" text-anchor="end" dominant-baseline="middle">Nov 13</text>
<text transform="translate(946.05,775.9) rotate(-49)" font-size="13.5" font-weight="bold" fill="#666" text-anchor="end" dominant-baseline="middle">Nov 17</text>
<text transform="translate(974.76,775.9) rotate(-49)" font-size="13.5" font-weight="bold" fill="#666" text-anchor="end" dominant-baseline="middle">Nov 21</text>
<text transform="translate(1003.48,775.9) rotate(-49)" font-size="13.5" font-weight="bold" fill="#666" text-anchor="end" dominant-baseline="middle">Nov 25</text>
<text transform="translate(1032.19,775.9) rotate(-49)" font-size="13.5" font-weight="bold" fill="#666" text-anchor="end" dominant-baseline="middle">Nov 29</text>
<text transform="translate(1060.90,775.9) rotate(-49)" font-size="13.5" font-weight="bold" fill="#666" text-anchor="end" dominant-baseline="middle">Dec 03</text>
<text transform="translate(1089.62,775.9) rotate(-49)" font-size="13.5" font-weight="bold" fill="#666" text-anchor="end" dominant-baseline="middle">Dec 07</text>
<text transform="translate(1118.33,775.9) rotate(-49)" font-size="13.5" font-weight="bold" fill="#666" text-anchor="end" dominant-baseline="middle">Dec 11</text>
<text transform="translate(1147.04,775.9) rotate(-49)" font-size="13.5" font-weight="bold" fill="#666" text-anchor="end" dominant-baseline="middle">Dec 15</text>
<text transform="translate(1175.76,775.9) rotate(-49)" font-size="13.5" font-weight="bold" fill="#666" text-anchor="end" dominant-baseline="middle">Dec 19</text>
<text transform="translate(1204.47,775.9) rotate(-49)" font-size="13.5" font-weight="bold" fill="#666" text-anchor="end" dominant-baseline="middle">Dec 23</text>
<text transform="translate(1233.18,775.9) rotate(-49)" font-size="13.5" font-weight="bold" fill="#666" text-anchor="end" dominant-baseline="middle">Dec 27</text>
<text transform="translate(1261.89,775.9) rotate(-49)" font-size="13.5" font-weight="bold" fill="#666" text-anchor="end" dominant-baseline="middle">Dec 31</text>
<path d="M825.10 672.90H1255.80" stroke="#12d488" stroke-width="1.5" opacity="0.8"/>
<circle cx="825.10" cy="672.90" r="3.15" fill="rgba(18,212,136,0.3)" stroke="#12d488" stroke-width="1"/>
<circle cx="832.28" cy="672.90" r="3.15" fill="rgba(18,212,136,0.3)" stroke="#12d488" stroke-width="1"/>
<circle cx="839.46" cy="672.90" r="3.15" fill="rgba(18,212,136,0.3)" stroke="#12d488" stroke-width="1"/>
<circle cx="846.63" cy="672.90" r="3.15" fill="rgba(18,212,136,0.3)" stroke="#12d488" stroke-width="1"/>
<circle cx="853.81" cy="672.90" r="3.15" fill="rgba(18,212,136,0.3)" stroke="#12d488" stroke-width="1"/>
<circle cx="860.99" cy="672.90" r="3.15" fill="rgba(18,212,136,0.3)" stroke="#12d488" stroke-width="1"/>
<circle cx="868.17" cy="672.90" r="3.15" fill="rgba(18,212,136,0.3)" stroke="#12d488" stroke-width="1"/>
<circle cx="875.35" cy="672.90" r="3.15" fill="rgba(18,212,136,0.3)" stroke="#12d488" stroke-width="1"/>
<circle cx="882.53" cy="672.90" r="3.15" fill="rgba(18,212,136,0.3)" stroke="#12d488" stroke-width="1"/>
<circle cx="889.71" cy="672.90" r="3.15" fill="rgba(18,212,136,0.3)" stroke="#12d488" stroke-width="1"/>
<circle cx="896.88" cy="672.90" r="3.15" fill="rgba(18,212,136,0.3)" stroke="#12d488" stroke-width="1"/>
<circle cx="904.06" cy="672.90" r="3.15" fill="rgba(18,212,136,0.3)" stroke="#12d488" stroke-width="1"/>
<circle cx="911.24" cy="672.90" r="3.15" fill="rgba(18,212,136,0.3)" stroke="#12d488" stroke-width="1"/>
<circle cx="918.42" cy="672.90" r="3.15" fill="rgba(18,212,136,0.3)" stroke="#12d488" stroke-width="1"/>
<circle cx="925.60" cy="672.90" r="3.15" fill="rgba(18,212,136,0.3)" stroke="#12d488" stroke-width="1"/>
<circle cx="932.77" cy="672.90" r="3.15" fill="rgba(18,212,136,0.3)" stroke="#12d488" stroke-width="1"/>
<circle cx="939.95" cy="672.90" r="3.15" fill="rgba(18,212,136,0.3)" stroke="#12d488" stroke-width="1"/>
<circle cx="947.13" cy="672.90" r="3.15" fill="rgba(18,212,136,0.3)" stroke="#12d488" stroke-width="1"/>
<circle cx="954.31" cy="672.90" r="3.15" fill="rgba(18,212,136,0.3)" stroke="#12d488" stroke-width="1"/>
<circle cx="961.49" cy="672.90" r="3.15" fill="rgba(18,212,136,0.3)" stroke="#12d488" stroke-width="1"/>
<circle cx="968.67" cy="672.90" r="3.15" fill="rgba(18,212,136,0.3)" stroke="#12d488" stroke-width="1"/>
<circle cx="975.85" cy="672.90" r="3.15" fill="rgba(18,212,136,0.3)" stroke="#12d488" stroke-width="1"/>
<circle cx="983.02" cy="672.90" r="3.15" fill="rgba(18,212,136,0.3)" stroke="#12d488" stroke-width="1"/>
<circle cx="990.20" cy="672.90" r="3.15" fill="rgba(18,212,136,0.3)" stroke="#12d488" stroke-width="1"/>
<circle cx="997.38" cy="672.90" r="3.15" fill="rgba(18,212,136,0.3)" stroke="#12d488" stroke-width="1"/>
<circle cx="1004.56" cy="672.90" r="3.15" fill="rgba(18,212,136,0.3)" stroke="#12d488" stroke-width="1"/>
<circle cx="1011.74" cy="672.90" r="3.15" fill="rgba(18,212,136,0.3)" stroke="#12d488" stroke-width="1"/>
<circle cx="1018.91" cy="672.90" r="3.15" fill="rgba(18,212,136,0.3)" stroke="#12d488" stroke-width="1"/>
<circle cx="1026.09" cy="672.90" r="3.15" fill="rgba(18,212,136,0.3)" stroke="#12d488" stroke-width="1"/>
<circle cx="1033.27" cy="672.90" r="3.15" fill="rgba(18,212,136,0.3)" stroke="#12d488" stroke-width="1"/>
<circle cx="1040.45" cy="672.90" r="3.15" fill="rgba(18,212,136,0.3)" stroke="#12d488" stroke-width="1"/>
<circle cx="1047.63" cy="672.90" r="3.15" fill="rgba(18,212,136,0.3)" stroke="#12d488" stroke-width="1"/>
<circle cx="1054.81" cy="672.90" r="3.15" fill="rgba(18,212,136,0.3)" stroke="#12d488" stroke-width="1"/>
<circle cx="1061.99" cy="672.90" r="3.15" fill="rgba(18,212,136,0.3)" stroke="#12d488" stroke-width="1"/>
<circle cx="1069.16" cy="672.90" r="3.15" fill="rgba(18,212,136,0.3)" stroke="#12d488" stroke-width="1"/>
<circle cx="1076.34" cy="672.90" r="3.15" fill="rgba(18,212,136,0.3)" stroke="#12d488" stroke-width="1"/>
<circle cx="1083.52" cy="672.90" r="3.15" fill="rgba(18,212,136,0.3)" stroke="#12d488" stroke-width="1"/>
<circle cx="1090.70" cy="672.90" r="3.15" fill="rgba(18,212,136,0.3)" stroke="#12d488" stroke-width="1"/>
<circle cx="1097.88" cy="672.90" r="3.15" fill="rgba(18,212,136,0.3)" stroke="#12d488" stroke-width="1"/>
<circle cx="1105.06" cy="672.90" r="3.15" fill="rgba(18,212,136,0.3)" stroke="#12d488" stroke-width="1"/>
<circle cx="1112.23" cy="672.90" r="3.15" fill="rgba(18,212,136,0.3)" stroke="#12d488" stroke-width="1"/>
<circle cx="1119.41" cy="672.90" r="3.15" fill="rgba(18,212,136,0.3)" stroke="#12d488" stroke-width="1"/>
<circle cx="1126.59" cy="672.90" r="3.15" fill="rgba(18,212,136,0.3)" stroke="#12d488" stroke-width="1"/>
<circle cx="1133.77" cy="672.90" r="3.15" fill="rgba(18,212,136,0.3)" stroke="#12d488" stroke-width="1"/>
<circle cx="1140.95" cy="672.90" r="3.15" fill="rgba(18,212,136,0.3)" stroke="#12d488" stroke-width="1"/>
<circle cx="1148.12" cy="672.90" r="3.15" fill="rgba(18,212,136,0.3)" stroke="#12d488" stroke-width="1"/>
<circle cx="1155.30" cy="672.90" r="3.15" fill="rgba(18,212,136,0.3)" stroke="#12d488" stroke-width="1"/>
<circle cx="1162.48" cy="672.90" r="3.15" fill="rgba(18,212,136,0.3)" stroke="#12d488" stroke-width="1"/>
<circle cx="1169.66" cy="672.90" r="3.15" fill="rgba(18,212,136,0.3)" stroke="#12d488" stroke-width="1"/>
<circle cx="1176.84" cy="672.90" r="3.15" fill="rgba(18,212,136,0.3)" stroke="#12d488" stroke-width="1"/>
<circle cx="1184.02" cy="672.90" r="3.15" fill="rgba(18,212,136,0.3)" stroke="#12d488" stroke-width="1"/>
<circle cx="1191.19" cy="672.90" r="3.15" fill="rgba(18,212,136,0.3)" stroke="#12d488" stroke-width="1"/>
<circle cx="1198.37" cy="672.90" r="3.15" fill="rgba(18,212,136,0.3)" stroke="#12d488" stroke-width="1"/>
<circle cx="1205.55" cy="672.90" r="3.15" fill="rgba(18,212,136,0.3)" stroke="#12d488" stroke-width="1"/>
<circle cx="1212.73" cy="672.90" r="3.15" fill="rgba(18,212,136,0.3)" stroke="#12d488" stroke-width="1"/>
<circle cx="1219.91" cy="672.90" r="3.15" fill="rgba(18,212,136,0.3)" stroke="#12d488" stroke-width="1"/>
<circle cx="1227.09" cy="672.90" r="3.15" fill="rgba(18,212,136,0.3)" stroke="#12d488" stroke-width="1"/>
<circle cx="1234.26" cy="672.90" r="3.15" fill="rgba(18,212,136,0.3)" stroke="#12d488" stroke-width="1"/>
<circle cx="1241.44" cy="672.90" r="3.15" fill="rgba(18,212,136,0.3)" stroke="#12d488" stroke-width="1"/>
<circle cx="1248.62" cy="672.90" r="3.15" fill="rgba(18,212,136,0.3)" stroke="#12d488" stroke-width="1"/>
<circle cx="1255.80" cy="672.90" r="3.15" fill="rgba(18,212,136,0.3)" stroke="#12d488" stroke-width="1"/>
</svg>
<div class="chart" style="left:1311px"></div>
<svg style="left:0;top:0" width="1887" height="894" viewBox="0 0 1887 894">
<text x="1569.0" y="541.7" font-size="15" font-weight="bold" fill="#666" text-anchor="middle">Clienti</text>
<rect x="1525.2" y="563.5" width="38" height="13.5" fill="rgba(39,100,241,0.3)" stroke="#2764f1" stroke-width="1"/>
<text x="1570.0" y="574.6" font-size="14" font-weight="bold" fill="#666">Clienti</text>
<path d="M1352.2 586.30H1359.4" stroke="rgba(0,0,0,0.085)" stroke-width="1"/>
<path d="M1359.4 586.30H1799.2" stroke="rgba(0,0,0,0.085)" stroke-width="1"/>
<text x="1349.7" y="591.00" font-size="14" font-weight="bold" fill="#666" text-anchor="end">1,0</text>
<path d="M1352.2 620.94H1359.4" stroke="rgba(0,0,0,0.085)" stroke-width="1"/>
<path d="M1359.4 620.94H1799.2" stroke="rgba(0,0,0,0.085)" stroke-width="1"/>
<text x="1349.7" y="625.64" font-size="14" font-weight="bold" fill="#666" text-anchor="end">0,8</text>
<path d="M1352.2 655.58H1359.4" stroke="rgba(0,0,0,0.085)" stroke-width="1"/>
<path d="M1359.4 655.58H1799.2" stroke="rgba(0,0,0,0.085)" stroke-width="1"/>
<text x="1349.7" y="660.28" font-size="14" font-weight="bold" fill="#666" text-anchor="end">0,6</text>
<path d="M1352.2 690.22H1359.4" stroke="rgba(0,0,0,0.085)" stroke-width="1"/>
<path d="M1359.4 690.22H1799.2" stroke="rgba(0,0,0,0.085)" stroke-width="1"/>
<text x="1349.7" y="694.92" font-size="14" font-weight="bold" fill="#666" text-anchor="end">0,4</text>
<path d="M1352.2 724.86H1359.4" stroke="rgba(0,0,0,0.085)" stroke-width="1"/>
<path d="M1359.4 724.86H1799.2" stroke="rgba(0,0,0,0.085)" stroke-width="1"/>
<text x="1349.7" y="729.56" font-size="14" font-weight="bold" fill="#666" text-anchor="end">0,2</text>
<path d="M1352.2 759.50H1359.4" stroke="rgba(0,0,0,0.085)" stroke-width="1"/>
<path d="M1359.4 759.50H1799.2" stroke="rgba(0,0,0,0.19)" stroke-width="1"/>
<text x="1349.7" y="764.20" font-size="14" font-weight="bold" fill="#666" text-anchor="end">0</text>
<path d="M1378.25 586.3V766.7" stroke="rgba(0,0,0,0.085)" stroke-width="1"/>
<path d="M1407.00 586.3V766.7" stroke="rgba(0,0,0,0.085)" stroke-width="1"/>
<path d="M1435.75 586.3V766.7" stroke="rgba(0,0,0,0.085)" stroke-width="1"/>
<path d="M1464.50 586.3V766.7" stroke="rgba(0,0,0,0.085)" stroke-width="1"/>
<path d="M1493.25 586.3V766.7" stroke="rgba(0,0,0,0.085)" stroke-width="1"/>
<path d="M1522.00 586.3V766.7" stroke="rgba(0,0,0,0.085)" stroke-width="1"/>
<path d="M1550.75 586.3V766.7" stroke="rgba(0,0,0,0.085)" stroke-width="1"/>
<path d="M1579.50 586.3V766.7" stroke="rgba(0,0,0,0.085)" stroke-width="1"/>
<path d="M1608.25 586.3V766.7" stroke="rgba(0,0,0,0.085)" stroke-width="1"/>
<path d="M1637.00 586.3V766.7" stroke="rgba(0,0,0,0.085)" stroke-width="1"/>
<path d="M1665.75 586.3V766.7" stroke="rgba(0,0,0,0.085)" stroke-width="1"/>
<path d="M1694.50 586.3V766.7" stroke="rgba(0,0,0,0.085)" stroke-width="1"/>
<path d="M1723.25 586.3V766.7" stroke="rgba(0,0,0,0.085)" stroke-width="1"/>
<path d="M1752.00 586.3V766.7" stroke="rgba(0,0,0,0.085)" stroke-width="1"/>
<path d="M1780.75 586.3V766.7" stroke="rgba(0,0,0,0.085)" stroke-width="1"/>
<path d="M1359.40 586.3V759.5" stroke="rgba(0,0,0,0.085)" stroke-width="1"/>
<text transform="translate(1369.70,775.9) rotate(-49)" font-size="13.5" font-weight="bold" fill="#666" text-anchor="end" dominant-baseline="middle">Nov 01</text>
<text transform="translate(1398.48,775.9) rotate(-49)" font-size="13.5" font-weight="bold" fill="#666" text-anchor="end" dominant-baseline="middle">Nov 05</text>
<text transform="translate(1427.26,775.9) rotate(-49)" font-size="13.5" font-weight="bold" fill="#666" text-anchor="end" dominant-baseline="middle">Nov 09</text>
<text transform="translate(1456.04,775.9) rotate(-49)" font-size="13.5" font-weight="bold" fill="#666" text-anchor="end" dominant-baseline="middle">Nov 13</text>
<text transform="translate(1484.82,775.9) rotate(-49)" font-size="13.5" font-weight="bold" fill="#666" text-anchor="end" dominant-baseline="middle">Nov 17</text>
<text transform="translate(1513.60,775.9) rotate(-49)" font-size="13.5" font-weight="bold" fill="#666" text-anchor="end" dominant-baseline="middle">Nov 21</text>
<text transform="translate(1542.38,775.9) rotate(-49)" font-size="13.5" font-weight="bold" fill="#666" text-anchor="end" dominant-baseline="middle">Nov 25</text>
<text transform="translate(1571.16,775.9) rotate(-49)" font-size="13.5" font-weight="bold" fill="#666" text-anchor="end" dominant-baseline="middle">Nov 29</text>
<text transform="translate(1599.94,775.9) rotate(-49)" font-size="13.5" font-weight="bold" fill="#666" text-anchor="end" dominant-baseline="middle">Dec 03</text>
<text transform="translate(1628.72,775.9) rotate(-49)" font-size="13.5" font-weight="bold" fill="#666" text-anchor="end" dominant-baseline="middle">Dec 07</text>
<text transform="translate(1657.50,775.9) rotate(-49)" font-size="13.5" font-weight="bold" fill="#666" text-anchor="end" dominant-baseline="middle">Dec 11</text>
<text transform="translate(1686.28,775.9) rotate(-49)" font-size="13.5" font-weight="bold" fill="#666" text-anchor="end" dominant-baseline="middle">Dec 15</text>
<text transform="translate(1715.06,775.9) rotate(-49)" font-size="13.5" font-weight="bold" fill="#666" text-anchor="end" dominant-baseline="middle">Dec 19</text>
<text transform="translate(1743.84,775.9) rotate(-49)" font-size="13.5" font-weight="bold" fill="#666" text-anchor="end" dominant-baseline="middle">Dec 23</text>
<text transform="translate(1772.62,775.9) rotate(-49)" font-size="13.5" font-weight="bold" fill="#666" text-anchor="end" dominant-baseline="middle">Dec 27</text>
<text transform="translate(1801.40,775.9) rotate(-49)" font-size="13.5" font-weight="bold" fill="#666" text-anchor="end" dominant-baseline="middle">Dec 31</text>
</svg>
<div class="abs" style="left:1817px;top:820px;width:60px;height:60px;border-radius:50%;background:#2563eb;box-shadow:0 4px 12px rgba(37,99,235,0.28)"></div>
<svg style="left:1827px;top:829px" width="40" height="40" viewBox="-20 -20 40 40"><circle cx="0" cy="0" r="12.1" fill="none" stroke="#fff" stroke-width="8"/><g transform="rotate(45)"><path d="M6.5 -2.9H17M6.5 2.9H17" stroke="#2563eb" stroke-width="1.6"/></g><g transform="rotate(135)"><path d="M6.5 -2.9H17M6.5 2.9H17" stroke="#2563eb" stroke-width="1.6"/></g><g transform="rotate(225)"><path d="M6.5 -2.9H17M6.5 2.9H17" stroke="#2563eb" stroke-width="1.6"/></g><g transform="rotate(315)"><path d="M6.5 -2.9H17M6.5 2.9H17" stroke="#2563eb" stroke-width="1.6"/></g></svg>
</body></html>
